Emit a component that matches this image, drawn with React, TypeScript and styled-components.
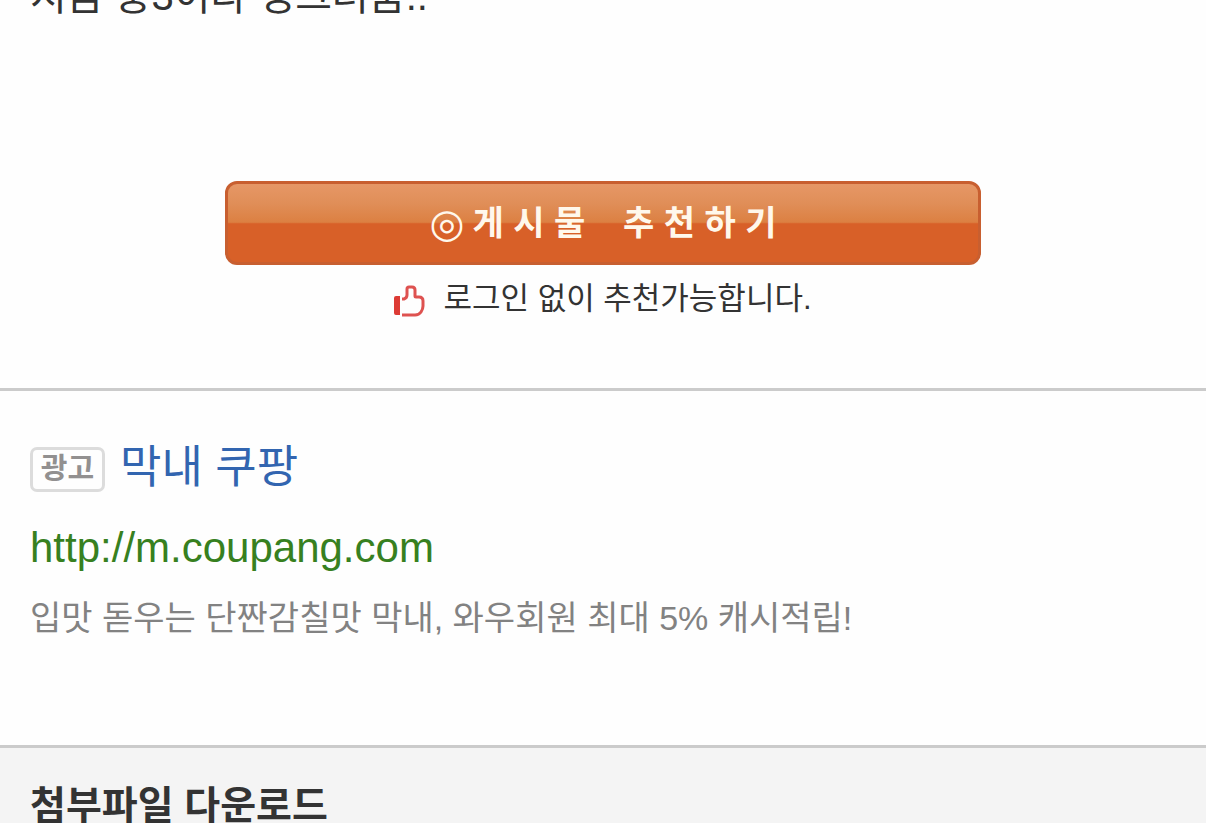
import React from "react";
import styled, { createGlobalStyle } from "styled-components";

const GlobalStyle = createGlobalStyle`
  * { box-sizing: border-box; }
  body {
    margin: 0;
    background: #fefefe;
    color: #333;
    font-family: "Liberation Sans", "Noto Sans CJK KR", sans-serif;
  }
`;

const Page = styled.main`
  min-height: 100vh;
  display: flex;
  flex-direction: column;
`;

const PostBody = styled.article`
  height: 18px;
  padding: 0 30px;
  overflow: hidden;
  display: flex;
  align-items: flex-end;
`;

const PostLine = styled.p`
  margin: 0;
  font-size: 40px;
  line-height: 44px;
`;

const Recommend = styled.section`
  padding: 163px 225px 67px;
  display: flex;
  flex-direction: column;
  align-items: center;
`;

const RecommendButton = styled.button`
  width: 100%;
  height: 84px;
  padding: 0;
  border: 3px solid #c85f30;
  border-radius: 12px;
  background: linear-gradient(#e69766 0%, #e08e58 25%, #dc8042 49%, #d86028 51%, #d86028 100%);
  color: #fff8ec;
  display: flex;
  align-items: center;
  justify-content: center;
  gap: 8px;
  font-family: inherit;
  font-size: 34px;
  font-weight: 700;
  line-height: 40px;
  white-space: pre;
`;

const Bullseye = styled.span`
  font-family: "DejaVu Sans", sans-serif;
  font-size: 40px;
`;

const Note = styled.p`
  margin: 12px 0 0;
  display: flex;
  align-items: center;
  gap: 17px;
  font-size: 31px;
  line-height: 44px;
`;

const Thumb = styled.svg`
  width: 32px;
  height: 32px;
  margin-top: 4px;
`;

const Ad = styled.section`
  border-top: 3px solid #cbcbcb;
  padding: 49px 30px 103px;
`;

const AdHeading = styled.div`
  display: flex;
  align-items: center;
  gap: 15px;
`;

const Badge = styled.span`
  width: 75px;
  height: 45px;
  margin-top: 2px;
  border: 3px solid #dcdcdc;
  border-radius: 7px;
  display: flex;
  align-items: center;
  justify-content: center;
  color: #929090;
  font-size: 29px;
  font-weight: 700;
  line-height: 36px;
`;

const AdTitle = styled.a`
  color: #3265b0;
  font-size: 45px;
  line-height: 56px;
  text-decoration: none;
`;

const AdUrl = styled.a`
  display: block;
  margin-top: 27px;
  color: #37801f;
  font-size: 42px;
  line-height: 50px;
  text-decoration: none;
`;

const AdText = styled.p`
  margin: 21px 0 0;
  color: #828282;
  font-size: 34px;
  line-height: 48px;
`;

const Attachments = styled.section`
  flex: 1;
  border-top: 3px solid #cbcbcb;
  background: #f4f4f4;
  padding: 36px 30px 0;
`;

const AttachmentsTitle = styled.h2`
  margin: 0;
  font-size: 39px;
  font-weight: 700;
  line-height: 44px;
`;

export default function App() {
  return (
    <>
      <GlobalStyle />
      <Page>
        <PostBody>
          <PostLine>지금 중3이라 싱그러움..</PostLine>
        </PostBody>
        <Recommend>
          <RecommendButton type="button">
            <Bullseye>◎</Bullseye>
            <span>{"게 시 물    추 천 하 기"}</span>
          </RecommendButton>
          <Note>
            <Thumb viewBox="0 0 32 32" fill="none" aria-hidden="true">
              <path d="M2 12h3v17H2q-1 0-1-1V13q0-1 1-1z" fill="#dd3b35" stroke="#dd3b35" strokeWidth="2" />
              <path
                d="M8 14h2q3-1 3-4V4q0-2 2-2h3q3 0 3 3v6q0 1 1 1h3q4 0 4 4v5q0 3-2 6-2 3-6 3H8"
                stroke="#de5250"
                strokeWidth="3"
              />
            </Thumb>
            로그인 없이 추천가능합니다.
          </Note>
        </Recommend>
        <Ad>
          <AdHeading>
            <Badge>광고</Badge>
            <AdTitle href="#coupang">막내 쿠팡</AdTitle>
          </AdHeading>
          <AdUrl href="#coupang">http://m.coupang.com</AdUrl>
          <AdText>입맛 돋우는 단짠감칠맛 막내, 와우회원 최대 5% 캐시적립!</AdText>
        </Ad>
        <Attachments>
          <AttachmentsTitle>첨부파일 다운로드</AttachmentsTitle>
        </Attachments>
      </Page>
    </>
  );
}
